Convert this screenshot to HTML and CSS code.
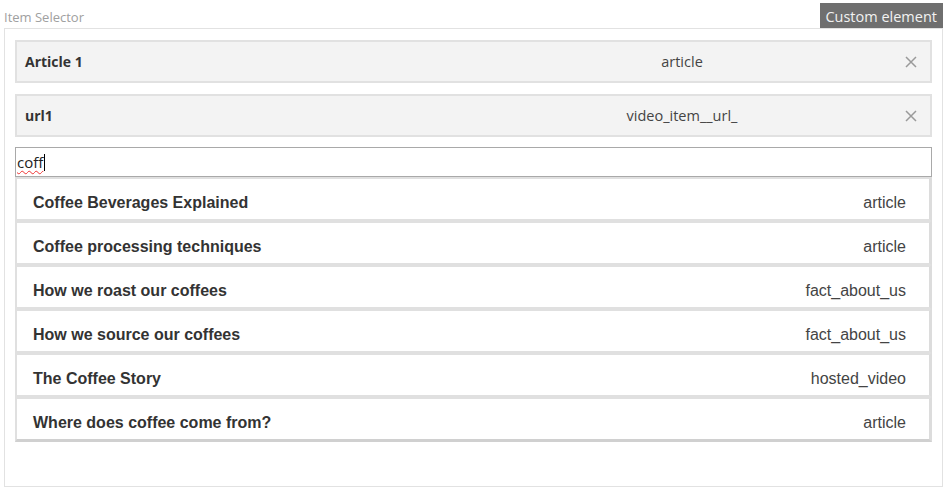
FILE: index.html
```html
<!DOCTYPE html>
<html>
<head>
<meta charset="utf-8">
<link rel="stylesheet" href="styles.css">
</head>
<body>
<div class="page">
  <div class="head">
    <span class="label">Item Selector</span>
    <span class="badge">Custom element</span>
  </div>
  <div class="box">
    <div class="chosen">
      <span class="chosen-name">Article 1</span>
      <span class="chosen-type">article</span>
      <span class="chosen-x"><svg width="12" height="12" viewBox="0 0 12 12"><path d="M1 1L11 11M11 1L1 11" stroke="#9a9a9a" stroke-width="1.5" fill="none"/></svg></span>
    </div>
    <div class="chosen">
      <span class="chosen-name">url1</span>
      <span class="chosen-type">video_item__url_</span>
      <span class="chosen-x"><svg width="12" height="12" viewBox="0 0 12 12"><path d="M1 1L11 11M11 1L1 11" stroke="#9a9a9a" stroke-width="1.5" fill="none"/></svg></span>
    </div>
    <div class="search"><span class="typed">coff</span><span class="caret"></span></div>
    <div class="list">
      <div class="opt"><span class="opt-name">Coffee Beverages Explained</span><span class="opt-type">article</span></div>
      <div class="opt"><span class="opt-name">Coffee processing techniques</span><span class="opt-type">article</span></div>
      <div class="opt"><span class="opt-name">How we roast our coffees</span><span class="opt-type">fact_about_us</span></div>
      <div class="opt"><span class="opt-name">How we source our coffees</span><span class="opt-type">fact_about_us</span></div>
      <div class="opt"><span class="opt-name">The Coffee Story</span><span class="opt-type">hosted_video</span></div>
      <div class="opt"><span class="opt-name">Where does coffee come from?</span><span class="opt-type">article</span></div>
    </div>
  </div>
</div>
</body>
</html>
```

FILE: styles.css
```css
* { box-sizing: border-box; }
html, body { margin: 0; padding: 0; background: #fff; }
.page {
  margin: 0 4px;
  font-family: "Open Sans", "Liberation Sans", sans-serif;
}
.head {
  display: flex;
  justify-content: space-between;
  align-items: flex-end;
  height: 28px;
}
.label {
  font-size: 13px;
  color: #a0a0a0;
  line-height: 16px;
  padding-bottom: 3px;
}
.badge {
  background: #6f6f6f;
  color: #f2f2f2;
  font-size: 14.5px;
  line-height: 25px;
  height: 25px;
  padding: 1px 6px 0 5px;
}
.box {
  border: 1px solid #e2e2e2;
  height: 459px;
  padding: 11px 10px 10px;
}
.chosen {
  display: grid;
  grid-template-columns: 1fr 420px 38px;
  align-items: center;
  height: 43px;
  border: 2px solid #e1e1e1;
  background: #f3f3f3;
  padding-left: 8px;
  margin-bottom: 11px;
  color: #333;
  font-size: 14px;
}
.chosen-name { font-weight: 700; }
.chosen-type { text-align: center; color: #444; font-size: 14.5px; }
.chosen-x { display: flex; justify-content: center; align-items: center; }
.search {
  height: 30px;
  margin-top: -1px;
  border: 1px solid #a9a9a9;
  display: flex;
  align-items: center;
  padding-left: 1px;
  font-size: 15px;
  color: #222;
}
.typed {
  text-decoration: underline wavy #e33;
  text-decoration-thickness: 1px;
  text-underline-offset: 2px;
}
.caret { width: 1px; height: 17px; background: #000; margin-left: 1px; }
.list {
  font-family: "Liberation Sans", Arial, sans-serif;
  font-size: 16px;
}
.opt {
  display: flex;
  justify-content: space-between;
  align-items: center;
  height: 44px;
  border: 2px solid #e0e0e0;
  border-right: 3px solid #dcdcdc;
  padding: 8px 23px 0 16px;
}
.opt:last-child { border-bottom: 3px solid #d0d0d0; height: 45px; }
.opt-name { font-weight: 700; color: #333; }
.opt-type { color: #444; }
```
